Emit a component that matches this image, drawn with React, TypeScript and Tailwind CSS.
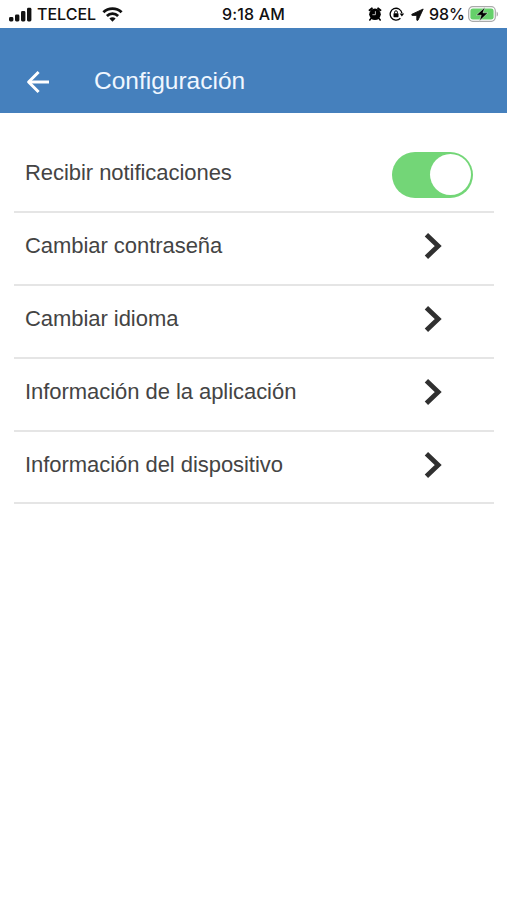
const links = [
  'Cambiar contraseña',
  'Cambiar idioma',
  'Información de la aplicación',
  'Información del dispositivo',
];

function StatusBar() {
  return (
    <div className="grid grid-cols-[1fr_auto_1fr] items-center h-7 pl-2 pr-[8px] bg-white text-[#111] font-['Inter',sans-serif] text-[16px] font-medium leading-7">
      <div className="flex items-center">
        <svg className="w-6 h-[15px]" viewBox="0 0 24 15" fill="currentColor">
          <rect x="1" y="10" width="4.4" height="4.5" rx="1.4" />
          <rect x="7" y="7.5" width="4.4" height="7" rx="1.4" />
          <rect x="13" y="4" width="4.4" height="10.5" rx="1.4" />
          <rect x="19" y="0.8" width="4.4" height="13.7" rx="1.4" />
        </svg>
        <span className="ml-[5px] w-[60px] whitespace-nowrap">TELCEL</span>
        <svg className="ml-[5px] w-[21px] h-[15px]" viewBox="0 0 21 15" fill="none" stroke="currentColor" strokeWidth={2.8}>
          <path d="M1.4 5.3a13 13 0 0 1 18.2 0" />
          <path d="M4.9 8.9a8 8 0 0 1 11.2 0" />
          <path d="M10.5 14.7L7.4 11.6a4.4 4.4 0 0 1 6.2 0z" fill="currentColor" stroke="none" />
        </svg>
      </div>

      <span className="tracking-[0.15px]">9:18 AM</span>

      <div className="flex items-center justify-end">
        {/* Alarm */}
        <svg className="w-[14px] h-[14px]" viewBox="0 0 14 14">
          <circle cx="7" cy="7.3" r="5.8" fill="#000" />
          <path d="M1.6 3.2L3.8 1.4M12.4 3.2L10.2 1.4" stroke="#000" strokeWidth={2} strokeLinecap="round" />
          <path d="M3 11.4L1.8 13M11 11.4L12.2 13" stroke="#000" strokeWidth={1.6} strokeLinecap="round" />
          <path d="M7.4 4.2v3.5H4.4" fill="none" stroke="#ccc" strokeWidth={0.9} />
        </svg>
        {/* Rotation lock */}
        <svg className="ml-[7px] w-4 h-[14px]" viewBox="0 0 16 14" fill="none" stroke="#000" strokeWidth={1.3}>
          <path d="M11.4 11.2A5.9 5.9 0 1 1 12.9 6.2" />
          <path d="M10.6 6.4h4.6l-2.3 3z" fill="#000" stroke="none" />
          <rect x="4.5" y="6.2" width="5" height="4" rx="0.6" fill="#000" stroke="none" />
          <path d="M5.6 6.4V5.2a1.4 1.4 0 0 1 2.8 0v1.2" strokeWidth={1} />
        </svg>
        {/* Location */}
        <svg className="ml-[6px] w-[13px] h-[13px]" viewBox="0 0 13 13" fill="currentColor">
          <path d="M12.2 1L1 6.2c-.5.3-.3 1.2.2 1.2h4.6v4.6c0 .6.9.8 1.2.2z" stroke="currentColor" strokeWidth={0.9} strokeLinejoin="round" />
        </svg>
        <span className="ml-[5px] w-[37px] whitespace-nowrap tracking-[-0.1px]">98%</span>
        {/* Battery */}
        <svg className="ml-[2px] w-[31px] h-[16px]" viewBox="0 0 31 16">
          <rect x="0.7" y="0.7" width="26.6" height="14.6" rx="4" fill="#fff" stroke="#aaa" strokeWidth={1.2} />
          <rect x="2.4" y="2.4" width="23.2" height="11.2" rx="2.4" fill="#65d06a" />
          <path d="M28.6 5.4c1.8.7 1.8 4.5 0 5.2z" fill="#aaa" />
          <path d="M17 1.2L8.2 9.2h5L11.4 15 20 6.8h-5z" fill="#000" stroke="#e6f8e6" strokeWidth={0.5} />
        </svg>
      </div>
    </div>
  );
}

function Header() {
  return (
    <header className="flex items-center h-[85px] pt-[21px] pl-[26px] bg-[#4580bd] text-white">
      <svg className="mt-px w-6 h-6" viewBox="0 0 24 24" fill="none" stroke="currentColor" strokeWidth={3}>
        <path d="M23 12H3" />
        <path d="M12.6 2L2.6 12l10 10" strokeLinejoin="round" />
      </svg>
      <h1 className="ml-11 mt-[-1px] text-[24.5px] leading-8 text-[#f0f7ff]">Configuración</h1>
    </header>
  );
}

export default function App() {
  return (
    <div className="w-full h-[900px] overflow-hidden bg-white font-['Liberation_Sans',Arial,sans-serif] text-[#444]">
      <StatusBar />
      <Header />

      <main className="pt-[27px] pl-[14px] pr-[13px] text-[22px] leading-7 tracking-[-0.05px]">
        <div className="flex items-center justify-between h-[72.9px] pl-[11px] pr-[21px] border-b-2 border-[#e5e5e5]">
          <span className="mt-[-4.2px]">Recibir notificaciones</span>
          <button type="button" role="switch" aria-checked="true" className="flex items-center justify-end mt-[-1px] w-[81px] h-[46px] pr-[2px] rounded-full bg-[#73d677]">
            <span className="w-[41px] h-[41px] rounded-full bg-white" />
          </button>
        </div>

        {links.map((label) => (
          <div key={label} className="flex items-center justify-between h-[72.9px] pl-[11px] pr-[52px] border-b-2 border-[#e5e5e5]">
            <span className="mt-[-4.2px]">{label}</span>
            <svg className="mt-[-4px] w-[18px] h-7" viewBox="0 0 18 28" fill="none" stroke="#303030" strokeWidth={4.8}>
              <path d="M2.4 2.8L14.2 14L2.4 25.2" />
            </svg>
          </div>
        ))}
      </main>
    </div>
  );
}
